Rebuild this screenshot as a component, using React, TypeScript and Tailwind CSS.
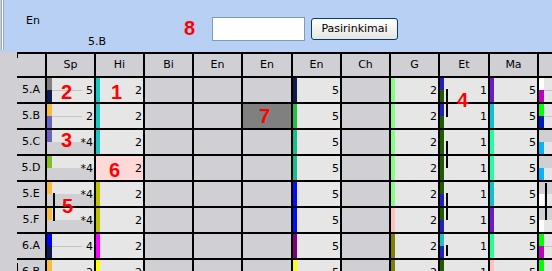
import React from 'react'

const L = '#e6e6e6'
const G = '#d0cfd4'

type Cell = {
  bar?: [string, string]
  body?: [string, string]
  mid?: boolean
  text?: string
} | null

// colours used by the timetable bars
const CY = '#1cc4c4'
const NAVY = '#0c1a50'
const ORG = '#f8bc3c'
const SLATE = '#6a64c4'
const LGN = '#80ff80'
const BL = '#2020c0'
const DG = '#1f5c00'
const PU = '#6a1ccc'
const CY2 = '#10c0d0'
const SG = '#20ffa0'
const PNK = '#ffc0c0'
const OLV = '#808000'
const MAG = '#c000c0'
const LIME = '#00ff00'
const SKY = '#00b4ff'

const headers = ['', 'Sp', 'Hi', 'Bi', 'En', 'En', 'En', 'Ch', 'G', 'Et', 'Ma', '']

const rows: { label: string; cells: Cell[] }[] = [
  {
    label: '5.A',
    cells: [
      { bar: ['#808080', NAVY], mid: true, text: '5' },
      { bar: [CY, CY], text: '2' },
      null, null, null,
      { bar: [NAVY, NAVY], text: '5' },
      null,
      { bar: [LGN, LGN], text: '2' },
      { bar: [BL, DG], text: '1' },
      { bar: [PU, PU], text: '5' },
      { bar: ['#ffffff', MAG], mid: true },
    ],
  },
  {
    label: '5.B',
    cells: [
      { bar: [ORG, SLATE], mid: true, text: '2' },
      { bar: [CY, CY], text: '2' },
      null, null,
      { bar: ['#808080', '#808080'], body: ['#808080', '#808080'] },
      { bar: ['#20c040', '#20c040'], text: '5' },
      null,
      { bar: [LGN, LGN], text: '2' },
      { bar: [BL, DG], text: '1' },
      { bar: [CY2, CY2], text: '5' },
      { bar: [LIME, '#0018c0'], mid: true },
    ],
  },
  {
    label: '5.C',
    cells: [
      { bar: [SLATE, G], body: [L, G], text: '*4' },
      { bar: [CY, CY], text: '2' },
      null, null, null,
      { bar: ['#10c090', '#10c090'], text: '5' },
      null,
      { bar: [LGN, LGN], text: '2' },
      { bar: [DG, DG], text: '1' },
      { bar: [SG, SG], text: '5' },
      { bar: [G, SKY], body: [G, L] },
    ],
  },
  {
    label: '5.D',
    cells: [
      { bar: ['#80c020', G], body: [L, G], text: '*4' },
      { bar: ['#ffd8d8', '#ffd8d8'], body: ['#ffd8d8', '#ffd8d8'], text: '2' },
      null, null, null,
      { bar: ['#10c090', '#10c090'], text: '5' },
      null,
      { bar: [LGN, LGN], text: '2' },
      { bar: [DG, DG], text: '1' },
      { bar: [SG, SG], text: '5' },
      { bar: [G, SKY], body: [G, L] },
    ],
  },
  {
    label: '5.E',
    cells: [
      { bar: [ORG, G], body: [L, G], text: '*4' },
      { bar: ['#c0c000', '#c0c000'], text: '2' },
      null, null, null,
      { bar: ['#0010ff', '#0010ff'], text: '5' },
      null,
      { bar: [LGN, LGN], text: '2' },
      { bar: [DG, BL], text: '1' },
      { bar: [CY2, CY2], text: '5' },
      { bar: [G, '#ffffff'], body: [G, L] },
    ],
  },
  {
    label: '5.F',
    cells: [
      { bar: [ORG, G], body: [L, G], text: '*4' },
      { bar: ['#c0c000', '#c0c000'], text: '2' },
      null, null, null,
      { bar: ['#0010ff', '#0010ff'], text: '5' },
      null,
      { bar: [PNK, PNK], text: '2' },
      { bar: [DG, BL], text: '1' },
      { bar: [PU, PU], text: '5' },
      { bar: [G, '#ffffff'], body: [G, L] },
    ],
  },
  {
    label: '6.A',
    cells: [
      { bar: ['#0000ff', NAVY], mid: true, text: '4' },
      { bar: ['#ff00ff', '#ff00ff'], text: '2' },
      null, null, null,
      { bar: ['#800080', '#800080'], text: '5' },
      null,
      { bar: [OLV, OLV], text: '2' },
      { bar: ['#20c0c0', BL], text: '1' },
      { bar: ['#20ff90', '#20ff90'], text: '5' },
      { bar: [LIME, MAG], mid: true },
    ],
  },
  {
    label: '6.B',
    cells: [
      { bar: [ORG, ORG], text: '2' },
      { bar: ['#ffff00', '#ffff00'], text: '2' },
      null, null, null,
      { bar: ['#ffff00', '#ffff00'], text: '5' },
      null,
      { bar: [OLV, OLV], text: '2' },
      { bar: [DG, DG], text: '1' },
      { bar: [PNK, PNK], text: '5' },
      { bar: [LIME, LIME] },
    ],
  },
]

function DataCell({ c, wide }: { c: Cell; wide: boolean }) {
  if (!c) return <div className="bg-[#d0cfd4]" />
  const body = c.body ?? [L, L]
  const bar = c.bar ?? body
  return (
    <div className="flex overflow-hidden">
      <div className={`flex shrink-0 flex-col ${wide ? 'w-[5px]' : 'w-[4px]'}`}>
        <div className="flex-1" style={{ background: bar[0] }} />
        <div className="flex-1" style={{ background: bar[1] }} />
      </div>
      <div
        className="flex flex-1 items-center pr-[1px]"
        style={{ background: `linear-gradient(${body[0]} 50%, ${body[1]} 50%)` }}
      >
        <div className={`mr-[4px] h-px flex-1 ${c.mid ? 'bg-[#c4c4c4]' : ''}`} />
        {c.text && <span className="leading-none">{c.text}</span>}
      </div>
    </div>
  )
}

const marks = [
  { d: '8', cls: 'left-[184px] top-[18px]' },
  { d: '2', cls: 'left-[61px] top-[82px]' },
  { d: '1', cls: 'left-[111px] top-[82px]' },
  { d: '3', cls: 'left-[61px] top-[130px]' },
  { d: '6', cls: 'left-[109px] top-[160px]' },
  { d: '5', cls: 'left-[62px] top-[196px]' },
  { d: '7', cls: 'left-[259px] top-[106px]' },
  { d: '4', cls: 'left-[457px] top-[90px]' },
]

export default function App() {
  return (
    <div className="relative h-[271px] w-[552px] overflow-hidden bg-[#d0cfd4] font-['DejaVu_Sans',sans-serif] text-[11px] text-black">
      {/* top toolbar */}
      <div className="flex h-[52px] items-start bg-[#b8d0f4] pl-[1px]">
        <div className="h-[50px] w-[3px] border-x border-[#a4a8b0] bg-white" />
        <div className="ml-[22px] flex w-[186px] flex-col pt-[14px] leading-[13px]">
          <span>En</span>
          <span className="ml-[62px] mt-[8px]">5.B</span>
        </div>
        <input className="mt-[17px] h-[24px] w-[93px] border border-[#7f9db9] bg-white outline-none" />
        <button className="ml-[6px] mt-[18px] h-[22px] w-[87px] rounded-[3px] border border-[#003c74] bg-linear-to-b from-white to-[#e6e5df] text-[11px] text-black">
          Pasirinkimai
        </button>
      </div>

      {/* timetable grid */}
      <div className="flex pl-[17px]">
        <div className="grid shrink-0 grid-cols-[28px_47px_47px_47px_47px_48px_47px_47px_47px_48px_47px_47px] grid-rows-[22px_repeat(8,24px)] gap-[2px] bg-black pt-[2px]">
          {headers.map((h, i) => (
            <div key={'h' + i} className="flex items-center justify-center bg-[#d0cfd4]">
              {h}
            </div>
          ))}
          {rows.map(r => (
            <React.Fragment key={r.label}>
              <div className="flex items-center justify-center bg-[#d0cfd4]">{r.label}</div>
              {r.cells.map((c, i) => (
                <DataCell key={i} c={c} wide={i === 0 || i === 10} />
              ))}
            </React.Fragment>
          ))}
        </div>
      </div>

      {/* conflict marks */}
      <div className="absolute left-[53px] top-[193px] h-[28px] w-[2px] bg-black" />
      <div className="absolute left-[446px] top-[89px] h-[28px] w-[2px] bg-black" />
      <div className="absolute left-[446px] top-[141px] h-[27px] w-[2px] bg-black" />
      <div className="absolute left-[446px] top-[193px] h-[27px] w-[2px] bg-black" />
      <div className="absolute left-[446px] top-[245px] h-[11px] w-[2px] bg-black" />
      <div className="absolute left-[545px] top-[183px] h-[37px] w-[2px] bg-black" />
      <div className="absolute left-[17px] top-[52px] h-[6px] w-px bg-black" />
      <div className="absolute left-[17px] top-[263px] h-[8px] w-px bg-black" />

      {/* red annotation numbers */}
      {marks.map(m => (
        <div
          key={m.d}
          className={`absolute ${m.cls} font-['Liberation_Sans',sans-serif] text-[20px] font-bold leading-[20px] text-[#ff0000]`}
        >
          {m.d}
        </div>
      ))}
    </div>
  )
}
